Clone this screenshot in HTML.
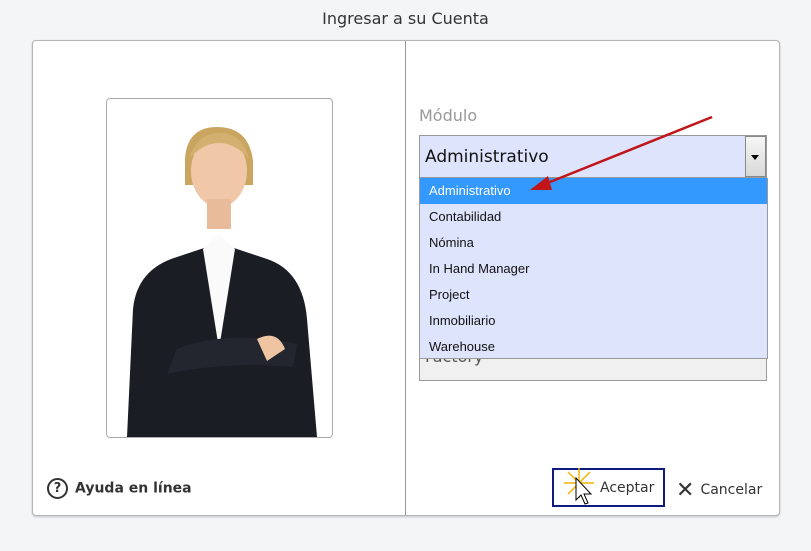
<!DOCTYPE html>
<html><head><meta charset="utf-8"><style>
body{margin:0;width:811px;height:551px;background:#f4f5f7;font-family:"DejaVu Sans","Liberation Sans",sans-serif;position:relative;overflow:hidden}
.t{position:absolute;top:9px;left:0;width:811px;text-align:center;font-size:16px;color:#333}
.panel{position:absolute;left:32px;top:40px;width:746px;height:474px;background:#fff;border:1px solid #b5b5b5;border-radius:4px;box-shadow:0 1px 2px rgba(0,0,0,.2)}
.div{position:absolute;left:405px;top:41px;width:1px;height:474px;background:#999}
.photo{position:absolute;left:106px;top:98px;width:225px;height:338px;border:1px solid #aaa;border-radius:4px;background:#fff;overflow:hidden}
.lbl{position:absolute;left:419px;top:106px;font-size:16px;color:#999}
.sel{position:absolute;left:419px;top:135px;width:346px;height:41px;border:1px solid #999;background:#dfe4fd}
.sel span{position:absolute;left:5px;top:11px;font-size:17px;color:#111}
.btn{position:absolute;right:0;top:0;width:19px;height:39px;border:1px solid #888;background:linear-gradient(#f6f6f6,#d8d8d8)}
.btn:after{content:"";position:absolute;left:5px;top:18px;border:4px solid transparent;border-top:5px solid #000}
.under{position:absolute;left:419px;top:350px;width:346px;height:29px;border:1px solid #999;background:#f0f0f0}
.under span{position:absolute;left:5px;top:-4px;font-size:16px;color:#555}
.list{position:absolute;left:419px;top:178px;width:347px;height:180px;background:#dfe4fd;border:1px solid #999;border-top:none;font-family:"Liberation Sans",sans-serif;font-size:13px;color:#111}
.list div{height:26px;line-height:26px;padding-left:9px}
.list .a{background:#3399ff;color:#fff}
.help{position:absolute;left:47px;top:478px;font-size:14px;font-weight:bold;color:#333}
.q{display:inline-block;width:17px;height:17px;border:2px solid #333;border-radius:50%;text-align:center;line-height:17px;font-size:13px;vertical-align:middle;margin-right:7px}
.ok{position:absolute;left:552px;top:468px;width:109px;height:35px;border:2px solid #0d1a80}
.ok span{position:absolute;left:46px;top:10px;font-size:14px;color:#333}
.cn{position:absolute;left:676px;top:478px;font-size:14px;color:#333}
</style></head><body>
<div class="t">Ingresar a su Cuenta</div>
<div class="panel"></div>
<div class="div"></div>
<div class="photo"><svg width="225" height="338" viewBox="0 0 225 338">
<path d="M78 60 Q80 28 110 28 Q142 28 146 62 L146 86 L78 86Z" fill="#c9a560"/>
<ellipse cx="112" cy="72" rx="28" ry="36" fill="#f0c8a8"/>
<path d="M82 60 Q90 34 112 34 Q136 34 142 60 Q128 44 112 44 Q96 44 82 60Z" fill="#d4b070"/>
<rect x="100" y="100" width="24" height="30" fill="#e8bc9a"/>
<path d="M20 338 L26 210 Q30 170 70 158 L100 148 L112 170 L124 148 L160 160 Q196 172 200 220 L210 338Z" fill="#1a1d24"/>
<path d="M96 150 L112 250 L128 150 L112 135Z" fill="#fafafa"/>
<path d="M70 250 Q120 230 190 245 L186 268 Q120 262 60 275Z" fill="#23262e"/>
<path d="M150 240 Q170 230 178 250 L160 262Z" fill="#efc4a2"/>
</svg></div>
<div class="lbl">Módulo</div>
<div class="under"><span>Factory</span></div>
<div class="sel"><span>Administrativo</span><div class="btn"></div></div>
<div class="list"><div class="a">Administrativo</div><div>Contabilidad</div><div>Nómina</div><div>In Hand Manager</div><div>Project</div><div>Inmobiliario</div><div>Warehouse</div></div>
<svg style="position:absolute;left:0;top:0" width="811" height="551"><line x1="712" y1="117" x2="545" y2="184" stroke="#c0161a" stroke-width="2.5"/><polygon points="530,190 548,176 552,190" fill="#c0161a"/></svg>
<div class="help"><span class="q">?</span>Ayuda en línea</div>
<div class="ok"><span>Aceptar</span></div>
<svg style="position:absolute;left:562px;top:466px" width="40" height="40"><g stroke="#f0b400" stroke-width="1.5"><line x1="17" y1="2" x2="17" y2="32"/><line x1="2" y1="17" x2="32" y2="17"/><line x1="6" y1="6" x2="28" y2="28"/><line x1="28" y1="6" x2="6" y2="28"/></g><path d="M14 12 L14 34 L19 29 L23 38 L26 37 L22 28 L29 28Z" fill="#fff" stroke="#000"/></svg>
<div class="cn"><span style="font-size:22px;vertical-align:-3px;margin-right:6px">✕</span>Cancelar</div>
</body></html>
